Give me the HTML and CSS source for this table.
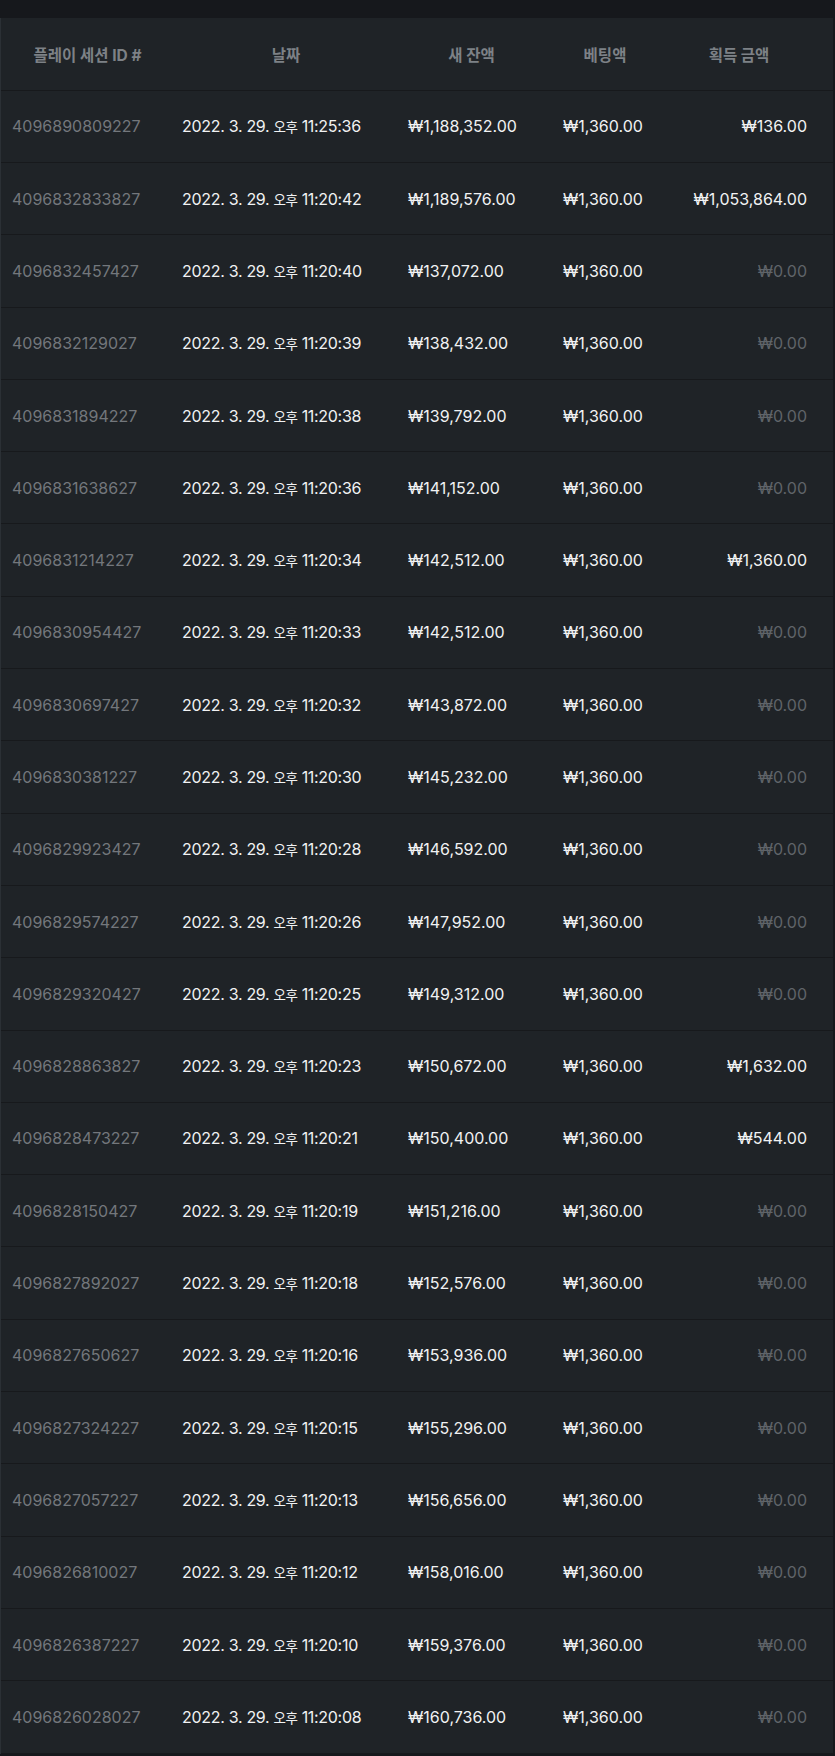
FILE: index.html
```html
<!DOCTYPE html>
<html lang="ko">
<head>
<meta charset="utf-8">
<title>플레이 세션</title>
<link rel="stylesheet" href="styles.css">
</head>
<body>
<div class="topbar"></div>
<div class="wrap">
<table class="hist">
<colgroup>
<col class="w1"><col class="w2"><col class="w3"><col class="w4"><col class="w5">
</colgroup>
<thead>
<tr><th class="c1">플레이 세션 ID #</th><th class="c2">날짜</th><th class="c3">새 잔액</th><th class="c4">베팅액</th><th class="c5">획득 금액</th></tr>
</thead>
<tbody>
<tr><td class="c1 id">4096890809227</td><td class="c2 date">2022. 3. 29. <span class="ampm">오후</span> 11:25:36</td><td class="c3">₩1,188,352.00</td><td class="c4">₩1,360.00</td><td class="c5 win">₩136.00</td></tr>
<tr><td class="c1 id">4096832833827</td><td class="c2 date">2022. 3. 29. <span class="ampm">오후</span> 11:20:42</td><td class="c3">₩1,189,576.00</td><td class="c4">₩1,360.00</td><td class="c5 win">₩1,053,864.00</td></tr>
<tr><td class="c1 id">4096832457427</td><td class="c2 date">2022. 3. 29. <span class="ampm">오후</span> 11:20:40</td><td class="c3">₩137,072.00</td><td class="c4">₩1,360.00</td><td class="c5 zero">₩0.00</td></tr>
<tr><td class="c1 id">4096832129027</td><td class="c2 date">2022. 3. 29. <span class="ampm">오후</span> 11:20:39</td><td class="c3">₩138,432.00</td><td class="c4">₩1,360.00</td><td class="c5 zero">₩0.00</td></tr>
<tr><td class="c1 id">4096831894227</td><td class="c2 date">2022. 3. 29. <span class="ampm">오후</span> 11:20:38</td><td class="c3">₩139,792.00</td><td class="c4">₩1,360.00</td><td class="c5 zero">₩0.00</td></tr>
<tr><td class="c1 id">4096831638627</td><td class="c2 date">2022. 3. 29. <span class="ampm">오후</span> 11:20:36</td><td class="c3">₩141,152.00</td><td class="c4">₩1,360.00</td><td class="c5 zero">₩0.00</td></tr>
<tr><td class="c1 id">4096831214227</td><td class="c2 date">2022. 3. 29. <span class="ampm">오후</span> 11:20:34</td><td class="c3">₩142,512.00</td><td class="c4">₩1,360.00</td><td class="c5 win">₩1,360.00</td></tr>
<tr><td class="c1 id">4096830954427</td><td class="c2 date">2022. 3. 29. <span class="ampm">오후</span> 11:20:33</td><td class="c3">₩142,512.00</td><td class="c4">₩1,360.00</td><td class="c5 zero">₩0.00</td></tr>
<tr><td class="c1 id">4096830697427</td><td class="c2 date">2022. 3. 29. <span class="ampm">오후</span> 11:20:32</td><td class="c3">₩143,872.00</td><td class="c4">₩1,360.00</td><td class="c5 zero">₩0.00</td></tr>
<tr><td class="c1 id">4096830381227</td><td class="c2 date">2022. 3. 29. <span class="ampm">오후</span> 11:20:30</td><td class="c3">₩145,232.00</td><td class="c4">₩1,360.00</td><td class="c5 zero">₩0.00</td></tr>
<tr><td class="c1 id">4096829923427</td><td class="c2 date">2022. 3. 29. <span class="ampm">오후</span> 11:20:28</td><td class="c3">₩146,592.00</td><td class="c4">₩1,360.00</td><td class="c5 zero">₩0.00</td></tr>
<tr><td class="c1 id">4096829574227</td><td class="c2 date">2022. 3. 29. <span class="ampm">오후</span> 11:20:26</td><td class="c3">₩147,952.00</td><td class="c4">₩1,360.00</td><td class="c5 zero">₩0.00</td></tr>
<tr><td class="c1 id">4096829320427</td><td class="c2 date">2022. 3. 29. <span class="ampm">오후</span> 11:20:25</td><td class="c3">₩149,312.00</td><td class="c4">₩1,360.00</td><td class="c5 zero">₩0.00</td></tr>
<tr><td class="c1 id">4096828863827</td><td class="c2 date">2022. 3. 29. <span class="ampm">오후</span> 11:20:23</td><td class="c3">₩150,672.00</td><td class="c4">₩1,360.00</td><td class="c5 win">₩1,632.00</td></tr>
<tr><td class="c1 id">4096828473227</td><td class="c2 date">2022. 3. 29. <span class="ampm">오후</span> 11:20:21</td><td class="c3">₩150,400.00</td><td class="c4">₩1,360.00</td><td class="c5 win">₩544.00</td></tr>
<tr><td class="c1 id">4096828150427</td><td class="c2 date">2022. 3. 29. <span class="ampm">오후</span> 11:20:19</td><td class="c3">₩151,216.00</td><td class="c4">₩1,360.00</td><td class="c5 zero">₩0.00</td></tr>
<tr><td class="c1 id">4096827892027</td><td class="c2 date">2022. 3. 29. <span class="ampm">오후</span> 11:20:18</td><td class="c3">₩152,576.00</td><td class="c4">₩1,360.00</td><td class="c5 zero">₩0.00</td></tr>
<tr><td class="c1 id">4096827650627</td><td class="c2 date">2022. 3. 29. <span class="ampm">오후</span> 11:20:16</td><td class="c3">₩153,936.00</td><td class="c4">₩1,360.00</td><td class="c5 zero">₩0.00</td></tr>
<tr><td class="c1 id">4096827324227</td><td class="c2 date">2022. 3. 29. <span class="ampm">오후</span> 11:20:15</td><td class="c3">₩155,296.00</td><td class="c4">₩1,360.00</td><td class="c5 zero">₩0.00</td></tr>
<tr><td class="c1 id">4096827057227</td><td class="c2 date">2022. 3. 29. <span class="ampm">오후</span> 11:20:13</td><td class="c3">₩156,656.00</td><td class="c4">₩1,360.00</td><td class="c5 zero">₩0.00</td></tr>
<tr><td class="c1 id">4096826810027</td><td class="c2 date">2022. 3. 29. <span class="ampm">오후</span> 11:20:12</td><td class="c3">₩158,016.00</td><td class="c4">₩1,360.00</td><td class="c5 zero">₩0.00</td></tr>
<tr><td class="c1 id">4096826387227</td><td class="c2 date">2022. 3. 29. <span class="ampm">오후</span> 11:20:10</td><td class="c3">₩159,376.00</td><td class="c4">₩1,360.00</td><td class="c5 zero">₩0.00</td></tr>
<tr><td class="c1 id">4096826028027</td><td class="c2 date">2022. 3. 29. <span class="ampm">오후</span> 11:20:08</td><td class="c3">₩160,736.00</td><td class="c4">₩1,360.00</td><td class="c5 zero">₩0.00</td></tr>
</tbody>
</table>
</div>
</body>
</html>
```

FILE: styles.css
```css
html, body {
  margin: 0;
  padding: 0;
  background: #16181c;
}
body {
  font-family: Inter, "Noto Sans CJK KR", sans-serif;
  color: #eef0f1;
  width: 835px;
}
.topbar {
  height: 18px;
  background: #16181c;
}
.wrap {
  width: 832px;
  border-left: 1px solid #2b3035;
  background: #1f2327;
}
.hist {
  width: 832px;
  table-layout: fixed;
  border-collapse: separate;
  border-spacing: 0;
}
.w1 { width: 172px; }
.w2 { width: 226px; }
.w3 { width: 146px; }
.w4 { width: 112px; }
.w5 { width: 176px; }

.hist th, .hist td {
  box-sizing: border-box;
  border-bottom: 1px solid #17191c;
  white-space: nowrap;
  vertical-align: middle;
}
.hist th {
  height: 72.7px;
  font-size: 15.5px;
  font-weight: 700;
  color: #7d8186;
  text-align: center;
}
.hist td {
  height: 72.3px;
  font-size: 16px;
  font-weight: 400;
  color: #f1f2f3;
  text-align: left;
}
.hist td.date { letter-spacing: -0.3px; }
.ampm {
  font-size: 13.5px;
  letter-spacing: -0.5px;
}
.c1 { padding: 0 10px 0 11px; }
.c2 { padding: 0 9px 0 9px; }
.c3 { padding: 0 10px 0 9px; }
.c4 { padding: 0 10px 0 18px; }
.c5 { padding: 0 26px 0 14px; }
.hist td.c5 { text-align: right; }
.hist td.id { color: #73777c; }
.hist td.zero { color: #5f6469; }
```
